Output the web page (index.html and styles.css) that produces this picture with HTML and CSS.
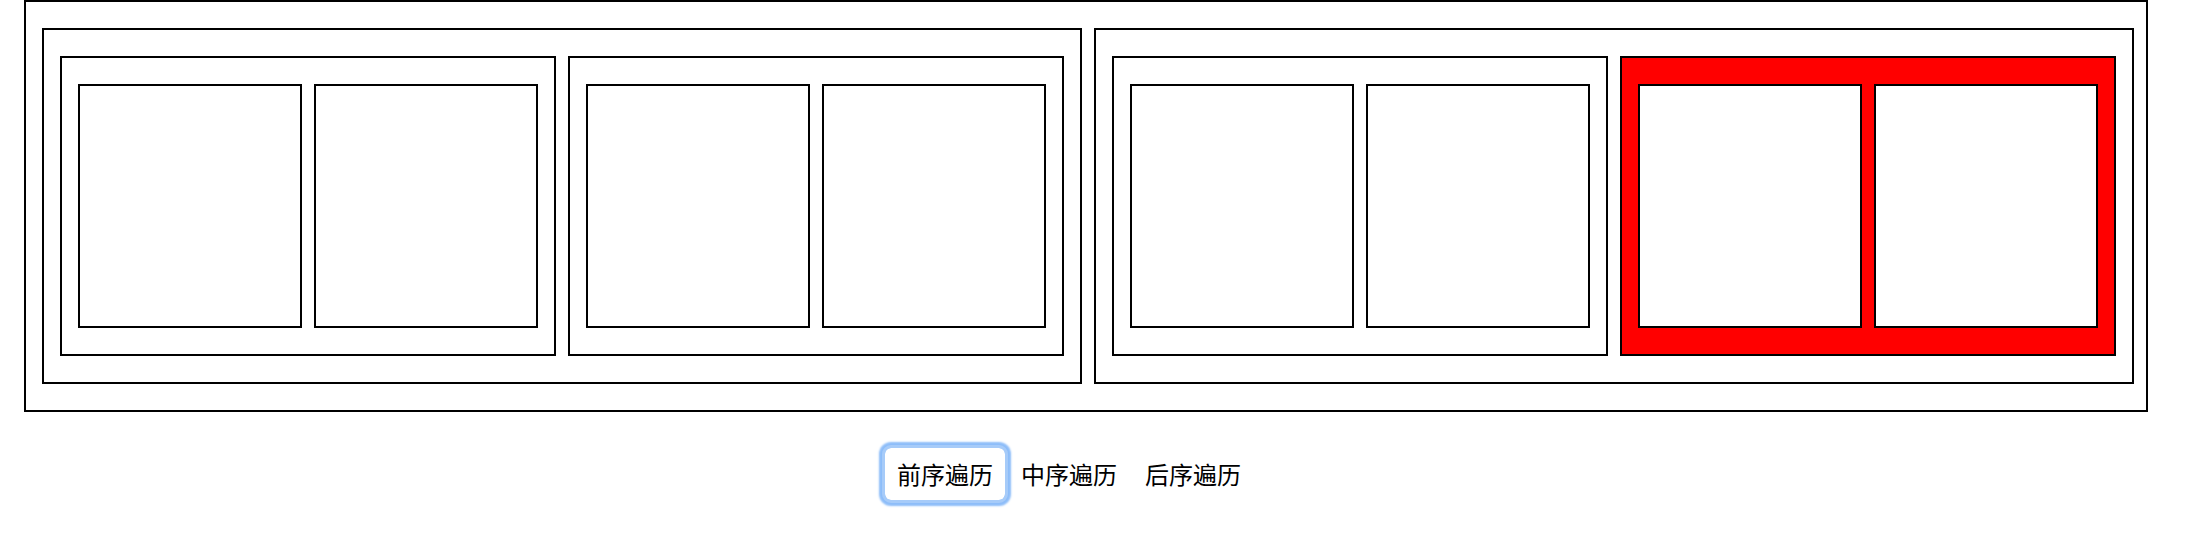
FILE: index.html
```html
<!DOCTYPE html>
<html lang="zh">
<head>
    <meta charset="UTF-8">
    <title>二叉树遍历</title>
    <link rel="stylesheet" href="styles.css">
</head>
<body>

<div class="box root">
    <div class="box">
        <div class="box">
            <div class="box leaf"></div>
            <div class="box leaf"></div>
        </div>
        <div class="box">
            <div class="box leaf"></div>
            <div class="box leaf"></div>
        </div>
    </div>
    <div class="box">
        <div class="box">
            <div class="box leaf"></div>
            <div class="box leaf"></div>
        </div>
        <div class="box active">
            <div class="box leaf"></div>
            <div class="box leaf"></div>
        </div>
    </div>
</div>

<div class="btns">
    <button class="btn focus">前序遍历</button>
    <button class="btn">中序遍历</button>
    <button class="btn">后序遍历</button>
</div>

</body>
</html>
```
FILE: styles.css
```css
*{
    padding: 0;
    margin: 0;
}
body{
    background-color: #fff;
    font-family: "Noto Sans CJK SC", "Noto Sans", sans-serif;
}
.box{
    display: flex;
    gap: 12px;
    border: 2px solid #000;
    padding: 26px 16px;
    background-color: #fff;
}
.root{
    width: fit-content;
    margin-left: 24px;
    padding-right: 12px;
}
.leaf{
    width: 224px;
    height: 244px;
    box-sizing: border-box;
    padding: 0;
}
.active{
    background-color: #ff0000;
}
.btns{
    display: flex;
    align-items: flex-start;
    gap: 4px;
    margin: 36px 0 0 885px;
    padding-bottom: 20px;
}
.btn{
    display: block;
    height: 52px;
    font: 400 24px/28px "Noto Sans CJK SC", sans-serif;
    color: #000;
    background: transparent;
    border: none;
    padding: 12px;
    border-radius: 6px;
}
.focus{
    position: relative;
    z-index: 1;
    background: #fff;
    outline: 3px solid #a6cbf9;
    outline-offset: 0;
    box-shadow: 0 0 2px 6px #8dbdf9;
}
```
